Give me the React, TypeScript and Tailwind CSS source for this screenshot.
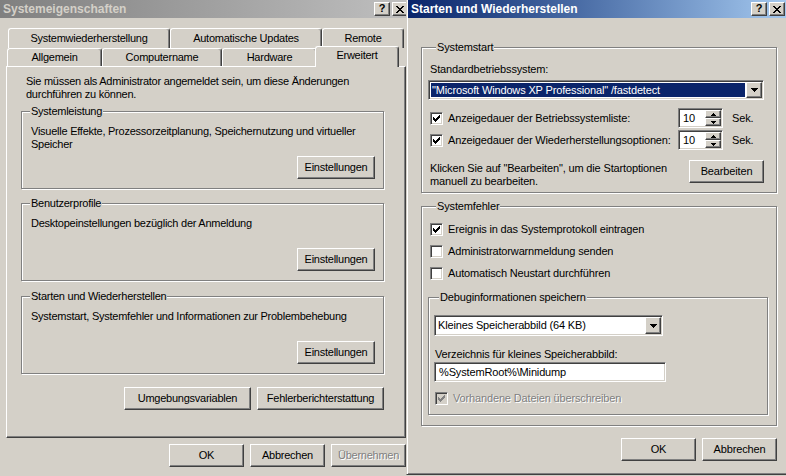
import React from 'react'

const face = 'bg-[#d4d0c8]'
const raised =
  'border border-t-white border-l-white border-r-[#404040] border-b-[#404040] shadow-[inset_-1px_-1px_0_#808080]'
const sunken =
  'border border-t-[#808080] border-l-[#808080] border-r-white border-b-white shadow-[inset_1px_1px_0_#404040,inset_-1px_-1px_0_#d4d0c8]'

// small pixel bitmaps, drawn like the classic Windows glyphs
function Bits({ rows, color = '#000' }: { rows: string[]; color?: string }) {
  const w = rows[0].length
  return (
    <svg width={w} height={rows.length} viewBox={`0 0 ${w} ${rows.length}`} shapeRendering="crispEdges" fill={color}>
      {rows.flatMap((r, y) =>
        [...r].map((c, x) => (c === '#' ? <rect key={`${x}-${y}`} x={x} y={y} width="1" height="1" /> : null))
      )}
    </svg>
  )
}

const CHECK = ['......#', '.....##', '#...###', '##.###.', '#####..', '.###...', '..#....']
const CLOSE = ['##....##', '.##..##.', '..####..', '...##...', '..####..', '.##..##.', '##....##']
const DOWN = ['#######', '.#####.', '..###..', '...#...']
const SPIN_UP = ['..#..', '.###.', '#####']
const SPIN_DOWN = ['#####', '.###.', '..#..']

function TitleBtn({ children }: { children: React.ReactNode }) {
  return (
    <div className={`${raised} ${face} w-[16px] h-[14px] flex items-center justify-center text-black font-bold leading-none tracking-normal`}>
      {children}
    </div>
  )
}

function TitleBar({ title, active }: { title: string; active?: boolean }) {
  return (
    <div
      className={`h-[18px] flex items-center pl-[3px] pr-[4px] gap-[2px] bg-linear-to-r ${
        active ? 'from-[#0a246a] to-[#a6caf0]' : 'from-[#808080] to-[#c0c0c0]'
      }`}
    >
      <span className={`flex-1 font-bold text-[12px] tracking-normal ${active ? 'text-white' : 'text-[#d4d0c8]'}`}>{title}</span>
      <TitleBtn>
        <span className="text-[11px] -mt-[1px]">?</span>
      </TitleBtn>
      <TitleBtn>
        <Bits rows={CLOSE} />
      </TitleBtn>
    </div>
  )
}

function Btn({ children, className = '', disabled }: { children: React.ReactNode; className?: string; disabled?: boolean }) {
  return (
    <button
      type="button"
      className={`${raised} ${face} h-[23px] flex items-center justify-center ${
        disabled ? 'text-[#808080] [text-shadow:1px_1px_0_#fff]' : ''
      } ${className}`}
    >
      {children}
    </button>
  )
}

function Group({
  title,
  className = '',
  labelClass = 'ml-[8px]',
  children,
}: {
  title: string
  className?: string
  labelClass?: string
  children?: React.ReactNode
}) {
  return (
    <div className={`border border-[#808080] shadow-[1px_1px_0_#fff,inset_1px_1px_0_#fff] flex flex-col ${className}`}>
      <div className={`-mt-[7px] px-[1px] w-fit ${face} ${labelClass}`}>{title}</div>
      {children}
    </div>
  )
}

function Check({ checked, disabled }: { checked?: boolean; disabled?: boolean }) {
  return (
    <div className={`${sunken} ${disabled ? face : 'bg-white'} w-[13px] h-[13px] shrink-0 flex items-center justify-center`}>
      {checked && <Bits rows={CHECK} color={disabled ? '#808080' : '#000'} />}
    </div>
  )
}

function CheckRow({ label, checked, disabled, className = '' }: { label: string; checked?: boolean; disabled?: boolean; className?: string }) {
  return (
    <div className={`flex items-center gap-[5px] h-[13px] ${className}`}>
      <Check checked={checked} disabled={disabled} />
      <span className={disabled ? 'text-[#808080] [text-shadow:1px_1px_0_#fff]' : ''}>{label}</span>
    </div>
  )
}

function Combo({ text, selected, className = '' }: { text: string; selected?: boolean; className?: string }) {
  return (
    <div className={`${sunken} bg-white flex p-[1px] ${className}`}>
      <div className="flex-1 flex p-[1px]">
        <div className={`flex-1 flex items-center pl-[1px] ${selected ? 'bg-[#0a246a] text-white' : ''}`}>{text}</div>
      </div>
      <div className={`${raised} ${face} w-[16px] flex items-center justify-center`}>
        <Bits rows={DOWN} />
      </div>
    </div>
  )
}

function Spinner() {
  return (
    <div className={`${sunken} bg-white w-[45px] h-[20px] flex p-[1px] shrink-0`}>
      <div className="flex-1 flex items-center pl-[3px]">10</div>
      <div className="w-[16px] flex flex-col">
        <div className={`${raised} ${face} flex-1 flex items-center justify-center`}>
          <Bits rows={SPIN_UP} />
        </div>
        <div className={`${raised} ${face} flex-1 flex items-center justify-center`}>
          <Bits rows={SPIN_DOWN} />
        </div>
      </div>
    </div>
  )
}

function Tab({ label, w, active }: { label: string; w: string; active?: boolean }) {
  return (
    <div
      className={`${face} ${w} rounded-t-[3px] border-t border-l border-r border-t-white border-l-white border-r-[#404040] shadow-[inset_-1px_0_0_#808080] flex justify-center ${
        active ? 'h-[21px] -mt-[2px] -ml-[2px] items-start pt-[2px]' : 'h-full items-center'
      }`}
    >
      {label}
    </div>
  )
}

function SettingsGroup({ title, text, className = '' }: { title: string; text: React.ReactNode; className?: string }) {
  return (
    <Group title={title} className={`h-[78px] ${className}`}>
      <div className="pl-[9px] mt-[7px]">{text}</div>
      <Btn className="w-[78px] mt-auto self-end mr-[8px] mb-[9px]">Einstellungen</Btn>
    </Group>
  )
}

function SystemProperties() {
  return (
    <div className={`absolute left-0 top-0 w-[414px] h-[476px] ${face} flex flex-col tracking-[-0.25px]`}>
      <div className="mr-[2px]">
        <TitleBar title="Systemeigenschaften" />
      </div>

      <div className="flex h-[20px] ml-[8px] mt-[10px]">
        <Tab label="Systemwiederherstellung" w="w-[162px]" />
        <Tab label="Automatische Updates" w="w-[152px]" />
        <Tab label="Remote" w="w-[82px]" />
      </div>
      <div className="flex h-[18px] ml-[7px] relative z-10">
        <Tab label="Allgemein" w="w-[95px]" />
        <Tab label="Computername" w="w-[120px]" />
        <Tab label="Hardware" w="w-[95px]" />
        <Tab label="Erweitert" w="w-[84px]" active />
      </div>

      <div className="ml-[6px] w-[400px] h-[372px] border border-t-white border-l-white border-r-[#404040] border-b-[#404040] shadow-[inset_-1px_-1px_0_#808080] flex flex-col pl-[14px] pr-[21px] pt-[8px]">
        <p className="ml-[5px]">
          Sie müssen als Administrator angemeldet sein, um diese Änderungen
          <br />
          durchführen zu können.
        </p>
        <SettingsGroup
          className="mt-[10px]"
          title="Systemleistung"
          text={
            <>
              Visuelle Effekte, Prozessorzeitplanung, Speichernutzung und virtueller
              <br />
              Speicher
            </>
          }
        />
        <SettingsGroup className="mt-[14px]" title="Benutzerprofile" text="Desktopeinstellungen bezüglich der Anmeldung" />
        <SettingsGroup
          className="mt-[15px]"
          title="Starten und Wiederherstellen"
          text="Systemstart, Systemfehler und Informationen zur Problembehebung"
        />
        <div className="flex justify-end gap-[6px] mt-[13px]">
          <Btn className="w-[127px]">Umgebungsvariablen</Btn>
          <Btn className="w-[127px]">Fehlerberichterstattung</Btn>
        </div>
      </div>

      <div className="flex justify-end gap-[6px] pr-[8px] mt-[6px]">
        <Btn className="w-[75px]">OK</Btn>
        <Btn className="w-[75px]">Abbrechen</Btn>
        <Btn className="w-[75px]" disabled>
          Übernehmen
        </Btn>
      </div>
    </div>
  )
}

function StartupRecovery() {
  return (
    <div
      className={`absolute left-[406px] top-0 w-[383px] h-[475px] ${face} border-l border-b border-l-[#d4d0c8] border-b-[#404040] shadow-[inset_1px_0_0_#fff,inset_0_-1px_0_#808080] pl-[1px] flex flex-col tracking-[-0.15px]`}
    >
      <TitleBar title="Starten und Wiederherstellen" active />

      <Group title="Systemstart" className="ml-[13px] mt-[29px] w-[356px] h-[146px] pl-[6px]">
        <div className="ml-[2px] mt-[9px]">Standardbetriebssystem:</div>
        <Combo className="w-[336px] h-[20px] mt-[4px]" text={'"Microsoft Windows XP Professional" /fastdetect'} selected />
        <div className="flex items-center h-[20px] mt-[8px] ml-[2px]">
          <Check checked />
          <span className="ml-[5px] w-[230px]">Anzeigedauer der Betriebssystemliste:</span>
          <Spinner />
          <span className="ml-[9px]">Sek.</span>
        </div>
        <div className="flex items-center h-[20px] mt-[2px] ml-[2px]">
          <Check checked />
          <span className="ml-[5px] w-[230px]">Anzeigedauer der Wiederherstellungsoptionen:</span>
          <Spinner />
          <span className="ml-[9px]">Sek.</span>
        </div>
        <div className="flex justify-between w-[336px] mt-[10px]">
          <p className="ml-[2px] mt-[2px]">
            Klicken Sie auf "Bearbeiten", um die Startoptionen
            <br />
            manuell zu bearbeiten.
          </p>
          <Btn className="w-[75px]">Bearbeiten</Btn>
        </div>
      </Group>

      <Group title="Systemfehler" className="ml-[13px] mt-[13px] w-[356px] h-[220px] pl-[6px]">
        <CheckRow className="ml-[2px] mt-[10px]" label="Ereignis in das Systemprotokoll eintragen" checked />
        <CheckRow className="ml-[2px] mt-[9px]" label="Administratorwarnmeldung senden" />
        <CheckRow className="ml-[2px] mt-[9px]" label="Automatisch Neustart durchführen" />

        <Group title="Debuginformationen speichern" labelClass="ml-[5px]" className="mt-[17px] w-[340px] h-[118px] pl-[5px]">
          <Combo className="w-[229px] h-[21px] mt-[11px]" text="Kleines Speicherabbild (64 KB)" />
          <div className="ml-[1px] mt-[12px]">Verzeichnis für kleines Speicherabbild:</div>
          <div className={`${sunken} bg-white w-[232px] h-[20px] mt-[1px] flex items-center pl-[4px]`}>%SystemRoot%\Minidump</div>
          <CheckRow className="ml-[1px] mt-[10px]" label="Vorhandene Dateien überschreiben" checked disabled />
        </Group>
      </Group>

      <div className="flex justify-end gap-[6px] pr-[12px] mt-[12px]">
        <Btn className="w-[75px]">OK</Btn>
        <Btn className="w-[75px]">Abbrechen</Btn>
      </div>
    </div>
  )
}

export default function App() {
  return (
    <div className="relative w-[786px] h-[476px] overflow-hidden bg-[#d4d0c8] text-black text-[11px] leading-[13px] font-['Liberation_Sans',Arial,sans-serif]">
      <SystemProperties />
      <StartupRecovery />
    </div>
  )
}
